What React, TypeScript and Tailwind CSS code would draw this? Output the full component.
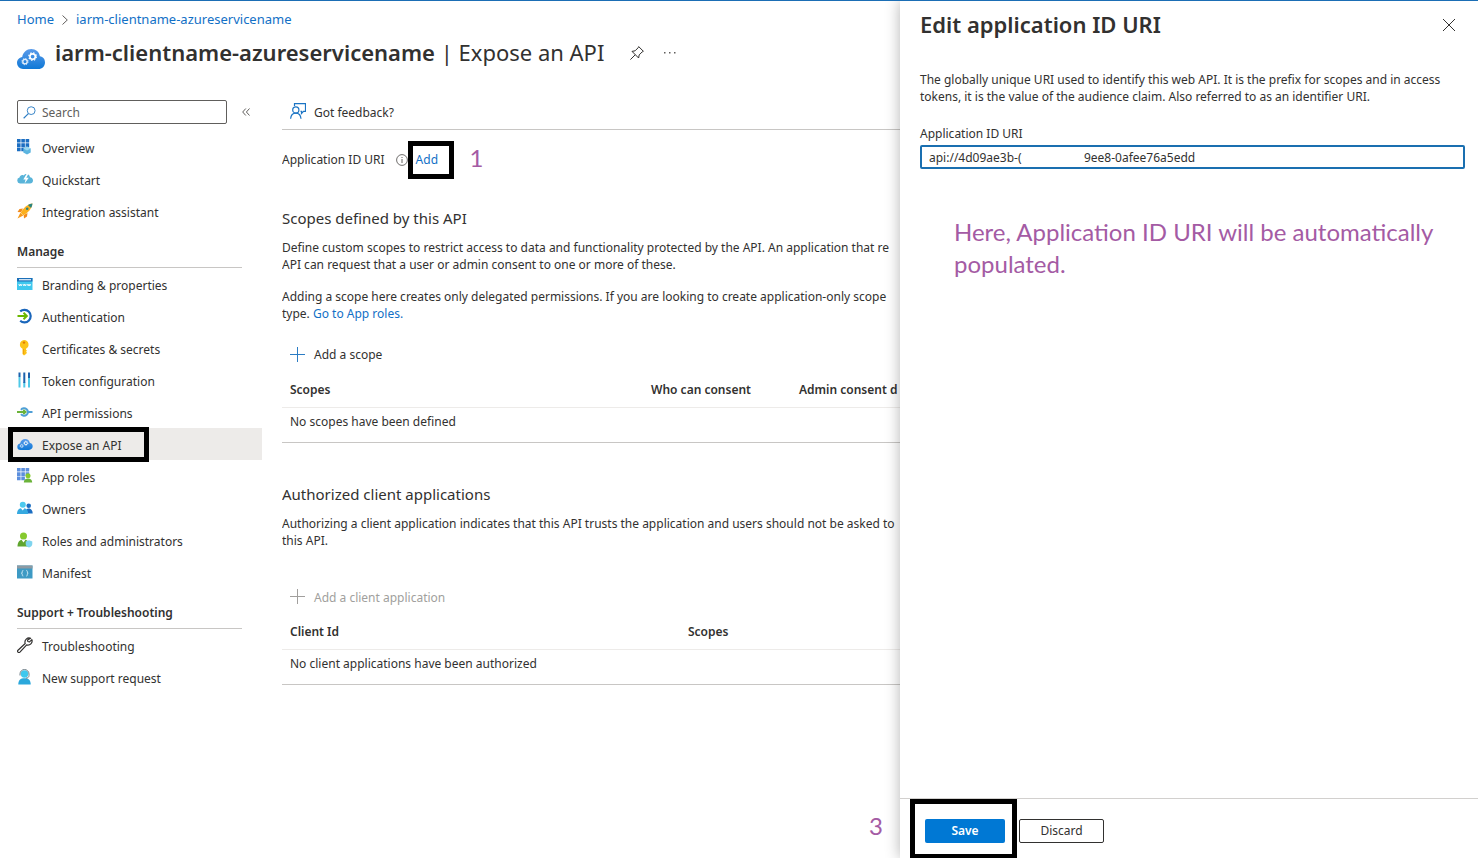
import type { ReactNode } from "react";

type NavEntry = { label: string; icon: ReactNode; active?: boolean };

function Glyph({ children }: { children: ReactNode }) {
  return (
    <svg viewBox="0 0 16 16" className="size-4 shrink-0" fill="none" aria-hidden="true">
      {children}
    </svg>
  );
}

function Gear({ cx, cy, r, color }: { cx: number; cy: number; r: number; color: string }) {
  return (
    <g stroke={color} fill="none">
      <circle cx={cx} cy={cy} r={r} strokeWidth={r * 0.6} />
      <circle cx={cx} cy={cy} r={r * 1.4} strokeWidth={r * 0.45} strokeDasharray={`${r * 0.55} ${r * 0.55}`} />
    </g>
  );
}

function CloudGears({ className }: { className: string }) {
  return (
    <svg viewBox="0 0 28 20" className={className} aria-hidden="true">
      <defs>
        <linearGradient id="cloud" x1="0" y1="0" x2="0" y2="1">
          <stop offset="0" stopColor="#5a9bea" />
          <stop offset="1" stopColor="#0f78d6" />
        </linearGradient>
      </defs>
      <path
        d="M6 20a6 6 0 0 1-6-6c0-3.2 2.3-5.5 5.200-5.900C6 3.200 9.700 0 14.300 0c4.500 0 8 3 8.600 7.300C26 7.700 28 10.200 28 13.400c0 3.700-2.900 6.600-6.600 6.600z"
        fill="url(#cloud)"
      />
      <Gear cx={15.600} cy={7.600} r={2.700} color="#fff" />
      <Gear cx={8} cy={12.600} r={2.200} color="#e3effc" />
    </svg>
  );
}

const topNav: NavEntry[] = [
  {
    label: "Overview",
    icon: (
      <Glyph>
        <path
          d="M0 0h3.600v3.600H0zM4.300 0h3.600v3.600H4.300zM8.600 0h3.600v3.600H8.600zM0 4.300h3.600v3.600H0zM4.300 4.300h3.600v3.600H4.300zM8.600 4.300h3.600v3.600H8.600zM0 8.600h3.600v3.600H0zM4.300 8.600h3.600v3.600H4.300z"
          fill="#1b6ec2"
        />
        <path d="M10 7.500l3.700 2v4L10 15.600l-3.700-2.100v-4z" fill="#5cb5e0" />
        <path d="M6.300 9.500l3.700 2 3.700-2-3.700-2z" fill="#9bd7ef" />
      </Glyph>
    ),
  },
  {
    label: "Quickstart",
    icon: (
      <Glyph>
        <path
          d="M3 12.500a3 3 0 0 1-.5-5.900C3 4.500 5 3.500 6.500 4.500 8 2 12.500 2.300 13 6.200c1.700.2 3 1.500 3 3.200s-1.300 3.100-3 3.100z"
          fill="#59b4d9"
        />
        <path d="M9.500 3L6.300 8.400h2.300l-1 4.200 4.200-5.800H9.300L11.300 3z" fill="#fff" />
      </Glyph>
    ),
  },
  {
    label: "Integration assistant",
    icon: (
      <Glyph>
        <path d="M6 5.500L2.500 6 .5 9l3.500.300zM10.500 10L10 13.500l-3 2-.3-3.500z" fill="#f28a1c" />
        <path d="M15.500.5C10.500 1 6 5 3.800 9.800l2.400 2.400C11 10 15 5.500 15.500.5z" fill="#fbb01e" />
        <path d="M3.400 9.800L.5 15.500l5.700-2.900z" fill="#f59a1a" />
        <path d="M15.500.5c-1.800.2-3.200.700-4.600 1.500l3.100 3.100c.8-1.400 1.300-2.800 1.500-4.600z" fill="#2a8580" />
        <circle cx="10.200" cy="5.800" r="1.300" fill="#2a8580" />
      </Glyph>
    ),
  },
];

const manageNav: NavEntry[] = [
  {
    label: "Branding & properties",
    icon: (
      <Glyph>
        <path d="M0 2h15.500v12H0z" fill="#3fc8ee" />
        <path d="M0 2h15.500v3.500H0z" fill="#1c6fb8" />
        <path d="M2 3.200h12v1.100H2z" fill="#fff" />
        <path
          d="M1.800 8l.8 2 .8-2 .8 2 .8-2M6.100 8l.8 2 .8-2 .8 2 .8-2M10.400 8l.8 2 .8-2 .8 2 .8-2"
          stroke="#fff"
          strokeWidth=".8"
        />
      </Glyph>
    ),
  },
  {
    label: "Authentication",
    icon: (
      <Glyph>
        <path d="M3.200 3.400A6.300 6.300 0 1 1 3.200 12.800" stroke="#1a66bb" strokeWidth="2.200" />
        <path d="M.5 8h9M6.500 4.700L9.900 8l-3.400 3.300" stroke="#6bb700" strokeWidth="1.900" />
      </Glyph>
    ),
  },
  {
    label: "Certificates & secrets",
    icon: (
      <Glyph>
        <path
          d="M7 0a4.600 4.600 0 0 1 2 8.700v1l1 1-1 1 1 1-1 1.200L7 15.500l-1.500-1.600V8.700A4.600 4.600 0 0 1 7 0z"
          fill="#fcc419"
        />
        <circle cx="7" cy="2.600" r="1.200" fill="#e07b00" />
        <path d="M6.600 9v5" stroke="#f09b0a" strokeWidth=".9" />
      </Glyph>
    ),
  },
  {
    label: "Token configuration",
    icon: (
      <Glyph>
        <path d="M1.500 5h2v10.500h-2zM6.300 10h2v5.500h-2zM11 6h2v9.500h-2z" fill="#4fc9e8" />
        <path d="M1.500 .5h2V5h-2zM6.300.5h2V11h-2zM11 .5h2V6h-2z" fill="#1c62ad" />
      </Glyph>
    ),
  },
  {
    label: "API permissions",
    icon: (
      <Glyph>
        <path d="M4 5.800a3.800 3.800 0 1 1 0 4.400" stroke="#4f9fd6" strokeWidth="2" />
        <path d="M11 8h4.500" stroke="#4f9fd6" strokeWidth="2" />
        <path d="M0 8h8.500M6.300 5.800L8.700 8l-2.400 2.200" stroke="#6bb33a" strokeWidth="1.800" />
      </Glyph>
    ),
  },
  { label: "Expose an API", icon: <CloudGears className="h-[11px] w-4 shrink-0" />, active: true },
  {
    label: "App roles",
    icon: (
      <Glyph>
        <path
          d="M0 0h3.600v3.600H0zM4.300 0h3.600v3.600H4.300zM8.600 0h3.600v3.600H8.600zM0 4.300h3.600v3.600H0zM4.300 4.300h3.600v3.600H4.300zM8.600 4.300h3.600v3.600H8.600zM0 8.600h3.600v3.600H0zM4.300 8.600h3.600v3.600H4.300z"
          fill="#5c8fdd"
        />
        <circle cx="11" cy="7.800" r="2.500" fill="#86c92e" />
        <path d="M6.800 14.500c0-2.700 1.700-4 4.200-4s4.200 1.300 4.200 4z" fill="#6bb33a" />
      </Glyph>
    ),
  },
  {
    label: "Owners",
    icon: (
      <Glyph>
        <circle cx="11.700" cy="5.800" r="2.300" fill="#1b6ec2" />
        <path d="M8 13.500c0-3 1.500-5 3.800-5s3.900 2 3.900 5z" fill="#1b6ec2" />
        <circle cx="5.800" cy="4.700" r="3" fill="#4cc9ee" />
        <path d="M0 14c0-4 2.200-6 5.600-6s5.600 2 5.600 6z" fill="#36a9e0" />
        <path d="M3.700 8l2 2.500L7.700 8z" fill="#fff" />
      </Glyph>
    ),
  },
  {
    label: "Roles and administrators",
    icon: (
      <Glyph>
        <circle cx="6.500" cy="4" r="3.500" fill="#86c92e" />
        <path d="M.5 14.500c0-4.500 2.200-7 6-7s6 2.500 6 7z" fill="#5fa52e" />
        <path d="M4.300 7.500l2.200 3 2.200-3z" fill="#fff" />
        <path d="M12 8.300l3.300 1.200v2.600c0 1.700-1.500 2.800-3.300 3.500-1.800-.7-3.300-1.800-3.300-3.500V9.500z" fill="#7fd4ee" />
      </Glyph>
    ),
  },
  {
    label: "Manifest",
    icon: (
      <Glyph>
        <path d="M0 1.500h15.500v13H0z" fill="#3d9ac4" />
        <path d="M0 1.500h15.500V4.500H0z" fill="#8d9aa3" />
        <path
          d="M6.300 6.500c-1 0-1 .4-1 1.300s-.2 1.400-.9 1.400c.7 0 .9.500.9 1.400s0 1.400 1 1.400M9.300 6.500c1 0 1 .4 1 1.300s.2 1.400.9 1.400c-.7 0-.9.500-.9 1.400s0 1.400-1 1.400"
          stroke="#d6eef8"
          strokeWidth=".9"
        />
      </Glyph>
    ),
  },
];

const supportNav: NavEntry[] = [
  {
    label: "Troubleshooting",
    icon: (
      <Glyph>
        <path
          d="M13.700 1.200a4.200 4.200 0 0 0-5.500 5.300L1 13.200a1.300 1.300 0 0 0 1.900 1.900l6.800-7.200a4.200 4.200 0 0 0 5.200-5.300l-2.400 2.300-1.700-.4-.3-1.500z"
          stroke="#323130"
          strokeWidth="1.200"
          strokeLinejoin="round"
        />
      </Glyph>
    ),
  },
  {
    label: "New support request",
    icon: (
      <Glyph>
        <circle cx="7.500" cy="5" r="3.700" fill="#3fc8ee" />
        <path d="M1.300 15.500c0-4.500 2.200-6.300 6.200-6.300s6.200 1.800 6.200 6.300z" fill="#2ba8dc" />
        <path d="M3 6.500V5a4.500 4.500 0 0 1 9 0v1.500c0 1.500-1 2.500-3 2.700" stroke="#6f7f88" strokeWidth="1" />
      </Glyph>
    ),
  },
];

function NavList({ items }: { items: NavEntry[] }) {
  return (
    <ul>
      {items.map((item) => (
        <li key={item.label} className="relative">
          <a
            href="#"
            aria-current={item.active ? "page" : undefined}
            className={
              item.active
                ? "flex h-8 items-center gap-[9px] bg-[#edebe9] pl-[17px]"
                : "flex h-8 items-center gap-[9px] pl-[17px]"
            }
          >
            {item.icon}
            <span className="pt-1">{item.label}</span>
          </a>
          {item.active && (
            <span className="pointer-events-none absolute -top-px left-2 h-[35px] w-[141px] border-5 border-black" />
          )}
        </li>
      ))}
    </ul>
  );
}

function NavHeading({ children }: { children: ReactNode }) {
  return (
    <h2 className="mt-[9px] mr-5 ml-[17px] flex h-8 items-center border-b border-[#c8c6c4] font-semibold">
      {children}
    </h2>
  );
}

function PlusIcon({ className }: { className: string }) {
  return (
    <svg viewBox="0 0 15 15" className={className} aria-hidden="true">
      <path d="M7.500 0v15M0 7.500h15" stroke="currentColor" />
    </svg>
  );
}

function Sidebar() {
  return (
    <nav className="w-[262px] shrink-0">
      <div className="mb-[7px] flex items-center gap-[15px] pl-[17px]">
        <label className="flex h-6 w-[210px] items-center gap-1.5 rounded-xs border border-[#605e5c] px-[5px]">
          <svg viewBox="0 0 14 14" className="size-[13px] shrink-0" fill="none" aria-hidden="true">
            <circle cx="8.800" cy="5" r="4.200" stroke="#2b7cc4" />
            <path d="M5.800 8.200L.7 13.200" stroke="#2b7cc4" strokeWidth="1.200" />
          </svg>
          <input
            type="text"
            aria-label="Search"
            placeholder="Search"
            className="w-full min-w-0 bg-transparent pt-0.5 outline-none placeholder:text-[#605e5c]"
          />
        </label>
        <button type="button" aria-label="Collapse menu">
          <svg viewBox="0 0 8 8" className="size-2" fill="none" aria-hidden="true">
            <path d="M3.800.5L.7 4l3.100 3.500M7.500.5L4.400 4l3.100 3.500" stroke="#605e5c" />
          </svg>
        </button>
      </div>
      <NavList items={topNav} />
      <NavHeading>Manage</NavHeading>
      <NavList items={manageNav} />
      <NavHeading>Support + Troubleshooting</NavHeading>
      <NavList items={supportNav} />
    </nav>
  );
}

function Content() {
  return (
    <main className="ml-5 min-w-0 flex-1 overflow-hidden whitespace-nowrap">
      <div className="flex h-[30px] items-center border-b border-[#c8c6c4] pb-1 pl-2">
        <button type="button" className="flex items-center gap-2">
          <svg viewBox="0 0 16 16" className="mb-1 size-4" fill="none" stroke="#1b74c4" strokeWidth="1.200" aria-hidden="true">
            <path d="M4.500 3V.7h11v7.600h-2l-2 2.200V8.300h-1" />
            <circle cx="5.800" cy="7" r="3.100" />
            <path d="M.6 15.800c.3-3.400 2.300-5.700 5.200-5.700s4.900 2.300 5.200 5.700" />
          </svg>
          Got feedback?
        </button>
      </div>

      <div className="mt-[11px] flex h-[38px] items-center">
        <span>Application ID URI</span>
        <svg viewBox="0 0 12 12" className="ml-[11px] size-3" fill="none" stroke="#605e5c" aria-hidden="true">
          <circle cx="6" cy="6" r="5.400" strokeWidth=".9" />
          <path d="M6 5v4M6 3v1" />
        </svg>
        <span className="flex h-[38px] w-[46px] items-center border-5 border-black pl-[3px]">
          <a href="#" className="text-[#1270c6]">
            Add
          </a>
        </span>
        <span className="ml-4 pb-1 font-['Lato',sans-serif] text-2xl text-[#a45ba4]">1</span>
      </div>

      <h2 className="mt-[27px] text-[15px] leading-6">Scopes defined by this API</h2>
      <p className="mt-[9px] leading-[17px]">
        Define custom scopes to restrict access to data and functionality protected by the API. An application that re
        <br />
        API can request that a user or admin consent to one or more of these.
      </p>
      <p className="mt-[15px] leading-[17px]">
        Adding a scope here creates only delegated permissions. If you are looking to create application-only scope
        <br />
        type.{" "}
        <a href="#" className="text-[#1270c6]">
          Go to App roles.
        </a>
      </p>
      <button type="button" className="mt-4 flex h-8 items-center gap-[9px] pl-2">
        <PlusIcon className="size-[15px] text-[#2b7cc4]" />
        <span className="pt-0.5">Add a scope</span>
      </button>
      <table className="mt-0.5 w-[1176px] table-fixed border-b border-[#c8c6c4] text-left">
        <colgroup>
          <col className="w-[361px]" />
          <col className="w-[148px]" />
          <col />
        </colgroup>
        <thead>
          <tr className="h-[35px] border-b border-[#edebe9]">
            <th className="pt-px pl-2 font-semibold">Scopes</th>
            <th className="pt-px pl-2 font-semibold">Who can consent</th>
            <th className="pt-px pl-2 font-semibold">Admin consent d</th>
          </tr>
        </thead>
        <tbody>
          <tr className="h-[35px]">
            <td colSpan={3} className="pb-1.5 pl-2">
              No scopes have been defined
            </td>
          </tr>
        </tbody>
      </table>

      <h2 className="mt-[39px] text-[15px] leading-6">Authorized client applications</h2>
      <p className="mt-[9px] leading-[17px]">
        Authorizing a client application indicates that this API trusts the application and users should not be asked to
        <br />
        this API.
      </p>
      <button type="button" disabled className="mt-8 flex h-8 items-center gap-[9px] pl-2 text-[#a19f9d]">
        <PlusIcon className="size-[15px]" />
        <span className="pt-0.5">Add a client application</span>
      </button>
      <table className="mt-0.5 w-[1176px] table-fixed border-b border-[#c8c6c4] text-left">
        <colgroup>
          <col className="w-[398px]" />
          <col />
        </colgroup>
        <thead>
          <tr className="h-[35px] border-b border-[#edebe9]">
            <th className="pt-px pl-2 font-semibold">Client Id</th>
            <th className="pt-px pl-2 font-semibold">Scopes</th>
          </tr>
        </thead>
        <tbody>
          <tr className="h-[35px]">
            <td colSpan={2} className="pb-1.5 pl-2">
              No client applications have been authorized
            </td>
          </tr>
        </tbody>
      </table>
    </main>
  );
}

function EditPanel() {
  return (
    <aside className="relative flex w-[578px] shrink-0 flex-col bg-white shadow-[0_0_14px_rgba(0,0,0,0.3)]">
      <div className="flex h-12 items-center justify-between pr-[23px] pl-5">
        <h2 className="pb-0.5 text-[22px] font-semibold">Edit application ID URI</h2>
        <button type="button" aria-label="Close">
          <svg viewBox="0 0 12 12" className="size-3" aria-hidden="true">
            <path d="M0 0l12 12M12 0L0 12" stroke="#323130" />
          </svg>
        </button>
      </div>
      <div className="flex-1 pt-[22px] pr-[13px] pl-5">
        <p className="leading-[17px]">
          The globally unique URI used to identify this web API. It is the prefix for scopes and in access tokens, it is
          the value of the audience claim. Also referred to as an identifier URI.
        </p>
        <label htmlFor="app-id-uri" className="mt-5 block leading-[17px]">
          Application ID URI
        </label>
        <input
          id="app-id-uri"
          type="text"
          defaultValue={"api://4d09ae3b-(\u00a0\u00a0\u00a0\u00a0\u00a0\u00a0\u00a0\u00a0\u00a0\u00a0\u00a0\u00a0\u00a0\u00a0\u00a0\u00a0\u00a0\u00a0\u00a0\u00a09ee8-0afee76a5edd"}
          className="mt-[3px] block h-6 w-full rounded-xs border-2 border-[#1a6fb0] px-[7px] outline-none"
        />
        <p className="mt-[47px] ml-[34px] font-['Lato',sans-serif] text-2xl leading-8 text-[#a45ba4]">
          Here, Application ID URI will be automatically populated.
        </p>
      </div>
      <footer className="flex h-[60px] items-center gap-0.5 border-t border-[#d2d0ce] pl-2.5">
        <span className="flex h-[60px] w-[107px] items-center border-5 border-black pt-1 pl-2.5">
          <button type="button" className="h-6 w-20 rounded-xs bg-[#0078d4] font-semibold text-white">
            Save
          </button>
        </span>
        <button type="button" className="mt-1 h-6 w-[85px] rounded-xs border border-[#323130]">
          Discard
        </button>
      </footer>
      <span className="absolute right-full bottom-4 mr-[17px] font-['Lato',sans-serif] text-2xl text-[#a45ba4]">3</span>
    </aside>
  );
}

export default function App() {
  return (
    <div className="flex h-screen overflow-hidden border-t border-[#1b6eb5] bg-white font-['Noto_Sans','Open_Sans',sans-serif] text-[12px] text-[#323130]">
      <div className="flex min-w-0 flex-1 flex-col overflow-hidden">
        <div className="flex h-9 items-center gap-2 pt-0.5 pl-[17px] text-[13px] text-[#1270c6]">
          <a href="#">Home</a>
          <svg viewBox="0 0 6 10" className="h-2.5 w-1.5" fill="none" aria-hidden="true">
            <path d="M.5.5L5.300 5 .5 9.500" stroke="#605e5c" />
          </svg>
          <a href="#">iarm-clientname-azureservicename</a>
        </div>
        <header className="flex h-[63px] items-start pl-[17px] whitespace-nowrap">
          <CloudGears className="mt-3 mr-2.5 h-5 w-7" />
          <h1 className="text-[22px] leading-[30px]">
            <span className="font-semibold">iarm-clientname-azureservicename</span> | Expose an API
          </h1>
          <button type="button" aria-label="Pin" className="mt-[9px] ml-[26px]">
            <svg viewBox="0 0 14 14" className="size-3.5" fill="none" stroke="#323130" aria-hidden="true">
              <path d="M8.700.6l4.700 4.700-1.200.6-3 3-.6 3.100-6.600-6.600 3.100-.6 3-3zM5.200 8.800L.4 13.600" />
            </svg>
          </button>
          <button type="button" aria-label="More" className="mt-[15px] ml-5">
            <svg viewBox="0 0 12 2" className="h-0.5 w-3" fill="#605e5c" aria-hidden="true">
              <path d="M0 0h1.500v1.500H0zM5 0h1.500v1.500H5zM10 0h1.500v1.500H10z" />
            </svg>
          </button>
        </header>
        <div className="flex min-h-0 flex-1">
          <Sidebar />
          <Content />
        </div>
      </div>
      <EditPanel />
    </div>
  );
}
